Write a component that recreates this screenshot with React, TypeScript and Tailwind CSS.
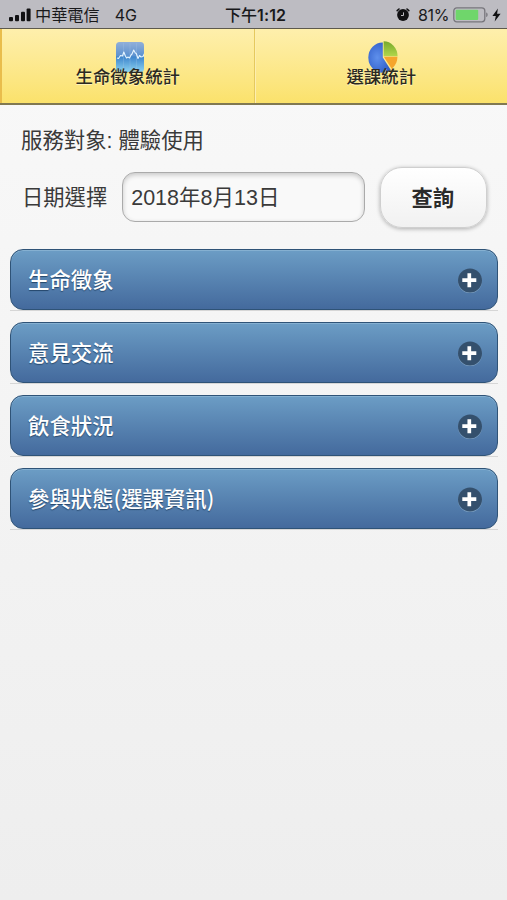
import type { ReactNode } from "react";

const sections = ["生命徵象", "意見交流", "飲食狀況", "參與狀態(選課資訊)"];

function SignalIcon() {
  return (
    <svg width="22" height="14" viewBox="0 0 22 14" fill="#111113" className="shrink-0">
      <rect x="0" y="9" width="4" height="4.2" rx="1" />
      <rect x="6" y="7" width="4" height="6.2" rx="1" />
      <rect x="12" y="3.8" width="4" height="9.4" rx="1" />
      <rect x="17.6" y="0.4" width="4" height="12.8" rx="1" />
    </svg>
  );
}

function AlarmIcon() {
  return (
    <svg width="14" height="14" viewBox="0 0 14 14" className="shrink-0">
      <circle cx="7" cy="7" r="5.9" fill="#111113" />
      <path d="M1.2 2.6 3 1M12.8 2.6 11 1" stroke="#111113" strokeWidth="1.6" strokeLinecap="round" />
      <path d="M7.5 4.4v3.1H5" fill="none" stroke="#bdbcc2" strokeWidth="1" />
    </svg>
  );
}

function BatteryIcon() {
  return (
    <svg width="36" height="16" viewBox="0 0 36 16" className="shrink-0">
      <rect x="0.8" y="0.8" width="31" height="14" rx="3" fill="none" stroke="#77767c" strokeWidth="1.3" />
      <rect x="2.7" y="2.7" width="22.5" height="10.2" rx="1" fill="#6fd66b" />
      <path d="M33.2 5.6c1.9.6 1.9 3.9 0 4.5z" fill="#77767c" />
    </svg>
  );
}

function StatusBar() {
  return (
    <header className="grid h-7 grid-cols-[1fr_auto_1fr] items-center bg-[#bdbcc2] pt-px text-base leading-6 text-[#19191b]">
      <div className="flex items-center pl-[9px]">
        <SignalIcon />
        <span className="ml-[4px] pb-[2px] text-[16.2px]">中華電信</span>
        <span className="ml-[15px] font-['Inter','Liberation_Sans',sans-serif] text-[16px]">4G</span>
      </div>
      <div className="pl-[4px] font-['Inter','Noto_Sans_CJK_TC',sans-serif] text-[16px] font-semibold tracking-[0.1px]">
        <span className="font-medium">下午</span>1:12
      </div>
      <div className="flex items-center justify-end pr-[6px]">
        <AlarmIcon />
        <span className="ml-[8px] mr-[4px] font-['Inter','Liberation_Sans',sans-serif] text-[16px] tracking-[-0.4px]">
          81%
        </span>
        <BatteryIcon />
        <svg width="9" height="14" viewBox="0 0 9 14" className="ml-[3px] shrink-0" fill="#111113">
          <path d="M5.9.5.4 7.9h3.4L2.7 13.5 8.6 5.8H5.1z" />
        </svg>
      </div>
    </header>
  );
}

function VitalsIcon() {
  return (
    <svg width="28" height="31" viewBox="0 0 28 31">
      <defs>
        <linearGradient id="vitals" x1="0" y1="0" x2="0" y2="1">
          <stop offset="0" stopColor="#91afd9" />
          <stop offset="0.45" stopColor="#5e93d0" />
          <stop offset="0.5" stopColor="#3f86cd" />
          <stop offset="1" stopColor="#8bd3f0" />
        </linearGradient>
      </defs>
      <rect y="1" width="28" height="30" rx="3.5" fill="url(#vitals)" />
      <path d="M7.5 2v28M14 2v28M20.5 2v28" stroke="#a9c9e8" strokeOpacity="0.35" strokeWidth="0.8" />
      <path
        d="M1 17l1.5.5 2-3 2 .5 1.3-4 1.4 3.5 1.3 2.5 1.5-1 1.5 1 1.5-3 1-1 1.7-4 1.6 3 1 .5 1.7 5 1.5-3 1.5 1.5 2-.5 1.5-3"
        fill="none"
        stroke="#e6f5ff"
        strokeWidth="1.1"
        strokeLinejoin="round"
      />
    </svg>
  );
}

function PieIcon() {
  return (
    <svg width="30" height="32" viewBox="0 0 30 32">
      <defs>
        <radialGradient id="pieBlue" cx="0.4" cy="0.5" r="0.6">
          <stop offset="0" stopColor="#5f90ec" />
          <stop offset="1" stopColor="#315fca" />
        </radialGradient>
        <linearGradient id="pieGreen" x1="0" y1="0" x2="0" y2="1">
          <stop offset="0" stopColor="#77a92b" />
          <stop offset="1" stopColor="#b1d64b" />
        </linearGradient>
      </defs>
      <path d="M14.8 1.5v15l8 12.4A14.3 15.2 0 0 1 .3 16.5 14.3 15.2 0 0 1 14.8 1.5z" fill="url(#pieBlue)" />
      <path d="M15.6 .3A14 15 0 0 1 29.6 15.2h-14z" fill="url(#pieGreen)" />
      <path d="M15.8 15.8h13.6a15 15 0 0 1-5.7 12z" fill="#f5a52c" />
    </svg>
  );
}

function Tab({ icon, label, className }: { icon: ReactNode; label: string; className: string }) {
  return (
    <button
      className={`flex flex-1 flex-col items-center bg-gradient-to-b from-[#feefac] to-[#fbe26b] pt-[12px] ${className}`}
    >
      <span className="h-[23px] pl-[4px]">{icon}</span>
      <span className="relative text-[17.4px] leading-[24px] font-medium text-[#2b2922] [text-shadow:0_1px_0_#fff3b8]">
        {label}
      </span>
    </button>
  );
}

function Section({ title }: { title: string }) {
  return (
    <div className="border-b border-[#d6d6d6]">
      <button className="flex h-[61px] w-full items-center justify-between rounded-[13px] border-[1.5px] border-[#2f5377] bg-gradient-to-b from-[#6c9dc5] to-[#446a9d] pr-[14px] pl-[17px] shadow-[inset_0_1px_0_#85b0d1]">
        <span className="pb-px text-[21.4px] leading-[30px] font-medium text-white [text-shadow:0_1px_1px_#24466b]">
          {title}
        </span>
        <svg width="26" height="26" viewBox="0 0 26 26">
          <circle cx="13" cy="14.2" r="12" fill="#7fa3c5" />
          <circle cx="13" cy="13.4" r="12" fill="#34506d" />
          <path d="M12.3 6.2v14M5.3 13.2h14" stroke="#fff" strokeWidth="3.7" />
        </svg>
      </button>
    </div>
  );
}

export default function App() {
  return (
    <div className="flex h-[900px] w-full flex-col overflow-hidden bg-gradient-to-b from-[#f9f9f9] to-[#eeeeee] font-['Noto_Sans_CJK_TC',sans-serif]">
      <StatusBar />
      <nav className="flex h-[77px] border-t-[1.5px] border-b-2 border-t-[#5d594c] border-b-[#807851]">
        <Tab
          icon={<VitalsIcon />}
          label="生命徵象統計"
          className="border-r border-l-2 border-r-[#e5c95e] border-l-[#e9bd4c]"
        />
        <Tab icon={<PieIcon />} label="選課統計" className="border-l border-[#fdeeb0]" />
      </nav>

      <main className="pt-[20px] pr-[9px] pl-[10px]">
        <p className="pl-[11px] font-['Liberation_Sans','Noto_Sans_CJK_TC',sans-serif] text-[21.4px] leading-[32px] text-[#3a3a3a]">
          服務對象: 體驗使用
        </p>
        <div className="mt-[9px] flex h-[62px] items-center pl-[12px] text-[21.3px] text-[#3a3a3a]">
          <span className="pb-[3px] leading-[32px]">日期選擇</span>
          <div className="ml-[15px] flex h-[50px] w-[243px] items-center rounded-[13px] border-[1.5px] border-[#aaa] bg-[#f9f9f9] pt-[3px] pl-[8px] font-['Liberation_Sans','Noto_Sans_CJK_TC',sans-serif] text-[21.5px] shadow-[inset_0_2px_5px_rgba(0,0,0,0.2)]">
            2018年8月13日
          </div>
          <button className="ml-[15px] h-[61px] w-[107px] rounded-[22px] border-[1.5px] border-[#cfcfcf] bg-gradient-to-b from-white to-[#f1f1f1] pr-[2px] pb-px font-bold text-[#2b2b2b] shadow-[0_1px_4px_rgba(0,0,0,0.3)]">
            查詢
          </button>
        </div>
        <div className="mt-[21px] flex flex-col gap-[11px]">
          {sections.map((title) => (
            <Section key={title} title={title} />
          ))}
        </div>
      </main>
    </div>
  );
}
